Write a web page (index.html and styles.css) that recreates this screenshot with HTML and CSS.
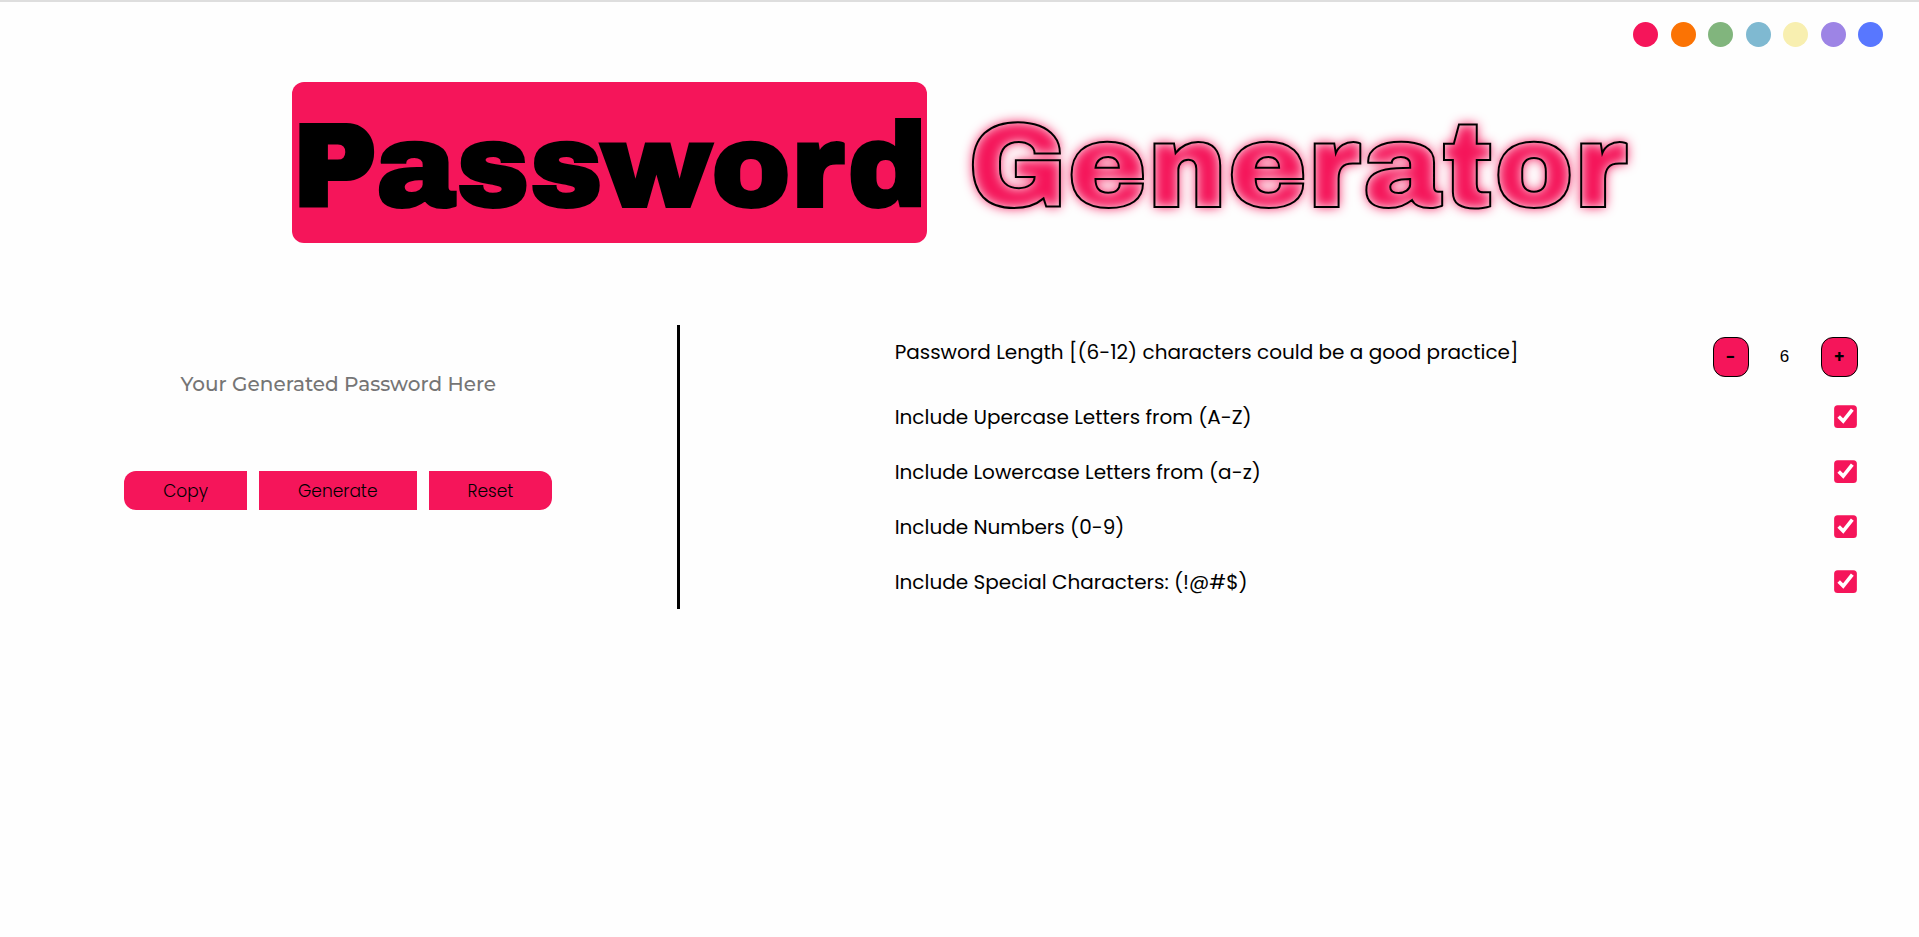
FILE: index.html
```html
<!DOCTYPE html>
<html lang="en">

<head>
  <meta charset="UTF-8">
  <meta name="viewport" content="width=device-width, initial-scale=1.0">
  <title>Password Generator</title>
  <link rel="stylesheet" href="styles.css">
</head>

<body>
  <!-- Theme colors -->
  <nav class="themes">
    <button type="button" class="theme red" aria-label="Red"></button>
    <button type="button" class="theme orange" aria-label="Orange"></button>
    <button type="button" class="theme green" aria-label="Green"></button>
    <button type="button" class="theme teal" aria-label="Teal"></button>
    <button type="button" class="theme yellow" aria-label="Yellow"></button>
    <button type="button" class="theme purple" aria-label="Purple"></button>
    <button type="button" class="theme blue" aria-label="Blue"></button>
  </nav>

  <h1 class="title">
    <span class="title-box">Password</span>
    <span class="title-glow">Generator</span>
  </h1>

  <main class="container">
    <section class="output">
      <input type="text" id="password" class="password" placeholder="Your Generated Password Here" aria-label="Generated password" readonly>
      <div class="buttons">
        <button type="button" class="btn btn-copy" id="copy">Copy</button>
        <button type="button" class="btn" id="generate">Generate</button>
        <button type="button" class="btn btn-reset" id="reset">Reset</button>
      </div>
    </section>

    <section class="options">
      <div class="option option-length">
        <label for="length">Password Length [(6-12) characters could be a good practice]</label>
        <div class="stepper">
          <button type="button" class="step" id="minus">-</button>
          <input type="text" id="length" class="length" value="6">
          <button type="button" class="step" id="plus">+</button>
        </div>
      </div>
      <div class="option">
        <label for="uppercase">Include Upercase Letters from (A-Z)</label>
        <input type="checkbox" id="uppercase" checked>
      </div>
      <div class="option">
        <label for="lowercase">Include Lowercase Letters from (a-z)</label>
        <input type="checkbox" id="lowercase" checked>
      </div>
      <div class="option">
        <label for="numbers">Include Numbers (0-9)</label>
        <input type="checkbox" id="numbers" checked>
      </div>
      <div class="option">
        <label for="special">Include Special Characters: (!@#$)</label>
        <input type="checkbox" id="special" checked>
      </div>
    </section>
  </main>
</body>

</html>
```

FILE: styles.css
```css
:root {
  --main: #f5155a;
}

* {
  margin: 0;
  padding: 0;
  box-sizing: border-box;
}

body {
  font-family: Poppins, Inter, sans-serif;
  background-color: #fefefe;
  color: #000;
  border-top: 2px solid #dedede;
}

/* Theme colors */
.themes {
  display: flex;
  justify-content: space-between;
  width: 250px;
  margin: 20px 36px 0 auto;
}

.theme {
  width: 25px;
  height: 25px;
  border: none;
  border-radius: 50%;
  cursor: pointer;
}

.red { background-color: #f5155a; }
.orange { background-color: #fb7304; }
.green { background-color: #81b57d; }
.teal { background-color: #7fb9d1; }
.yellow { background-color: #f8efb0; }
.purple { background-color: #9d84e5; }
.blue { background-color: #5877ff; }

/* Title */
.title {
  display: flex;
  justify-content: center;
  gap: 40px;
  margin-top: 35px;
  font-family: "Archivo Black", Inter, sans-serif;
  font-size: 120px;
  font-weight: 400;
  line-height: 152px;
  -webkit-text-stroke: 2px #000;
}

.title span {
  padding-top: 9px;
}

.title-box {
  background-color: var(--main);
  border-radius: 12px;
}

.title-glow {
  color: transparent;
  text-shadow: 0 0 12px var(--main);
}

/* Main content */
.container {
  display: grid;
  grid-template-columns: 17fr 31fr;
  margin-top: 82px;
}

.output {
  display: flex;
  flex-direction: column;
  align-items: center;
  height: 284px;
  padding-top: 39px;
  border-right: 3px solid #000;
}

.password {
  width: 80%;
  height: 40px;
  border: none;
  outline: none;
  background: none;
  font-family: Montserrat, Inter, sans-serif;
  font-size: 20px;
  font-weight: 500;
  text-align: center;
}

.password::placeholder {
  color: #757575;
}

.buttons {
  display: flex;
  gap: 12px;
  margin-top: 67px;
}

.btn {
  height: 39px;
  padding: 0 39px;
  border: none;
  background-color: var(--main);
  color: #000;
  font-family: inherit;
  font-size: 17px;
  font-weight: 300;
  cursor: pointer;
}

.btn-copy {
  border-radius: 12px 0 0 12px;
}

.btn-reset {
  border-radius: 0 12px 12px 0;
}

/* Options */
.options {
  padding: 12px 61px 0 215px;
}

.option {
  display: flex;
  justify-content: space-between;
  align-items: center;
  height: 55px;
  font-size: 20px;
}

.option-length {
  align-items: flex-start;
  height: 52px;
  line-height: 30px;
}

.option input[type="checkbox"] {
  width: 13px;
  height: 13px;
  margin-right: 6px;
  accent-color: var(--main);
  transform: scale(1.75);
}

.stepper {
  display: flex;
  align-items: center;
}

.step {
  height: 40px;
  padding: 0 12px;
  border: 1px solid #000;
  border-radius: 12px;
  background-color: var(--main);
  color: #000;
  font-family: inherit;
  font-size: 17px;
  font-weight: 600;
  cursor: pointer;
}

.length {
  width: 72px;
  border: none;
  background: none;
  font-family: "Liberation Sans", Arial, sans-serif;
  font-size: 17px;
  text-align: center;
}
```
